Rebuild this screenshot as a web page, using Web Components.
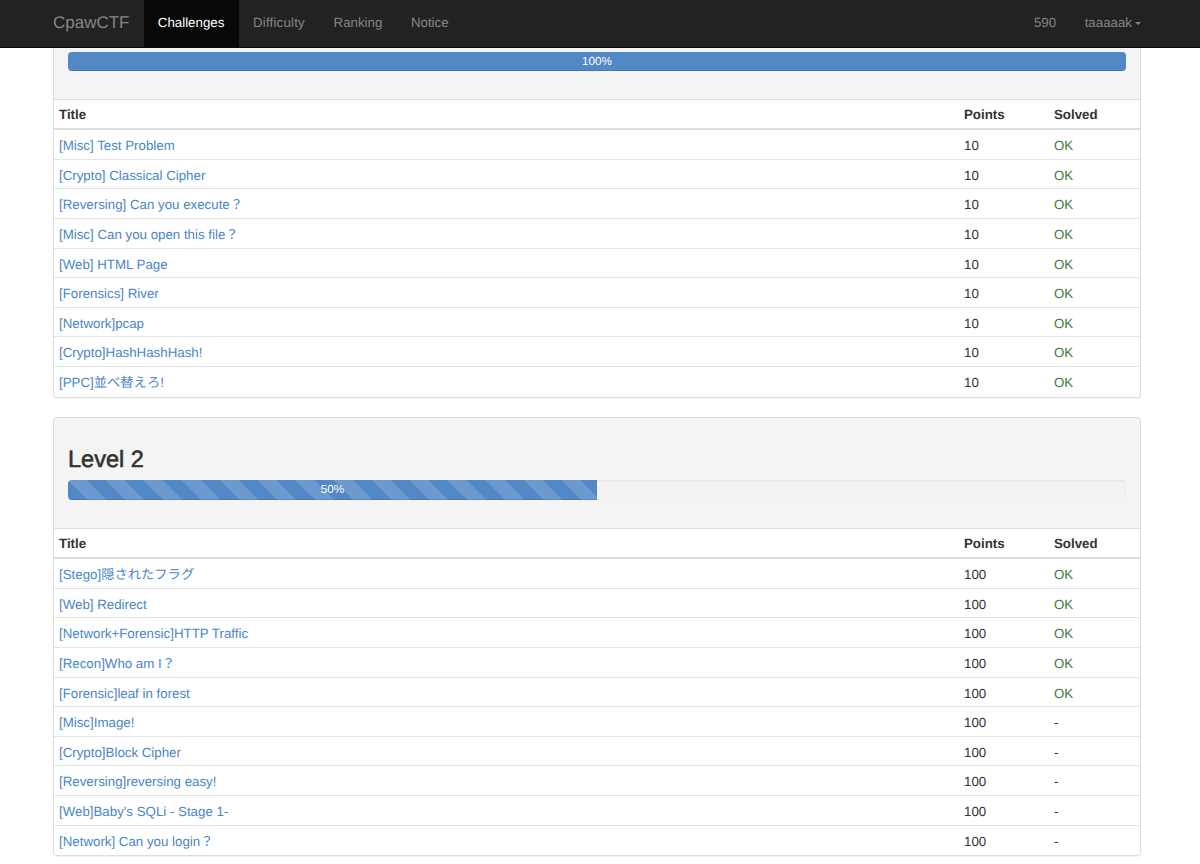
<!DOCTYPE html>
<html lang="ja">
<head>
<meta charset="utf-8">
<title>CpawCTF</title>
<style>
html, body { margin: 0; height: 100%; overflow: hidden; background: #fff; }
body {
    font-family: "Liberation Sans", "Noto Sans CJK JP", sans-serif;
    font-size: 13.3px;
    text-rendering: geometricPrecision;
    color: #333;
}
</style>
</head>
<body>
<cpaw-navbar score="590" user="taaaaak"></cpaw-navbar>
<cpaw-page>
    <level-panel percent="100" cut>
        <challenge-row title="[Misc] Test Problem" points="10" solved></challenge-row>
        <challenge-row title="[Crypto] Classical Cipher" points="10" solved></challenge-row>
        <challenge-row title="[Reversing] Can you execute？" points="10" solved></challenge-row>
        <challenge-row title="[Misc] Can you open this file？" points="10" solved></challenge-row>
        <challenge-row title="[Web] HTML Page" points="10" solved></challenge-row>
        <challenge-row title="[Forensics] River" points="10" solved></challenge-row>
        <challenge-row title="[Network]pcap" points="10" solved></challenge-row>
        <challenge-row title="[Crypto]HashHashHash!" points="10" solved></challenge-row>
        <challenge-row title="[PPC]並べ替えろ!" points="10" solved></challenge-row>
    </level-panel>
    <level-panel heading="Level 2" percent="50" striped>
        <challenge-row title="[Stego]隠されたフラグ" points="100" solved></challenge-row>
        <challenge-row title="[Web] Redirect" points="100" solved></challenge-row>
        <challenge-row title="[Network+Forensic]HTTP Traffic" points="100" solved></challenge-row>
        <challenge-row title="[Recon]Who am I？" points="100" solved></challenge-row>
        <challenge-row title="[Forensic]leaf in forest" points="100" solved></challenge-row>
        <challenge-row title="[Misc]Image!" points="100"></challenge-row>
        <challenge-row title="[Crypto]Block Cipher" points="100"></challenge-row>
        <challenge-row title="[Reversing]reversing easy!" points="100"></challenge-row>
        <challenge-row title="[Web]Baby's SQLi - Stage 1-" points="100"></challenge-row>
        <challenge-row title="[Network] Can you login？" points="100"></challenge-row>
    </level-panel>
</cpaw-page>

<script>
class CpawNavbar extends HTMLElement {
    constructor() {
        super();
        this.sr = this.attachShadow({ mode: "open" });
    }

    connectedCallback() {
        const score = this.getAttribute("score");
        const user = this.getAttribute("user");

        this.sr.innerHTML = `<style>
:host {
    display: flex;
    box-sizing: border-box;
    height: 48px;
    padding: 0 59px 0 53px;
    background: #222;
    border-bottom: 1px solid #080808;
    line-height: 46px;
    color: #858585;
}
a {
    color: inherit;
    text-decoration: none;
    padding: 0 14.3px;
}
.brand {
    font-size: 17px;
    padding: 0 14px 0 0;
}
.active {
    color: #fff;
    background: #080808;
}
.wide {
    letter-spacing: .2px;
}
.right {
    margin-left: auto;
    display: flex;
}
.caret {
    display: inline-block;
    margin-left: 3px;
    vertical-align: middle;
    border-top: 3.5px solid;
    border-left: 3.5px solid transparent;
    border-right: 3.5px solid transparent;
}
.user {
    padding-right: 0;
}
</style>
<a class="brand" href="#">CpawCTF</a>
<a class="active" href="#">Challenges</a>
<a class="wide" href="#">Difficulty</a>
<a href="#">Ranking</a>
<a href="#">Notice</a>
<div class="right">
    <a href="#">${score}</a>
    <a class="user" href="#">${user}<span class="caret"></span></a>
</div>`;
    }
}

class CpawPage extends HTMLElement {
    constructor() {
        super();
        this.sr = this.attachShadow({ mode: "open" });
        this.sr.innerHTML = `<style>
:host {
    display: flex;
    flex-direction: column;
    gap: 19.5px;
    width: 1088px;
    margin-left: 53px;
}
</style>
<slot></slot>`;
    }
}

class LevelPanel extends HTMLElement {
    constructor() {
        super();
        this.sr = this.attachShadow({ mode: "open" });
    }

    connectedCallback() {
        const heading = this.getAttribute("heading");
        const percent = this.getAttribute("percent");
        const striped = this.hasAttribute("striped") ? "striped" : "";

        this.sr.innerHTML = `<style>
:host {
    display: block;
    box-sizing: border-box;
    background: #f4f4f4;
    border: 1px solid #ddd;
    border-radius: 4px;
    box-shadow: 0 1px 1px rgba(0, 0, 0, .05);
    overflow: hidden;
}
:host([cut]) {
    border-top: 0;
    border-radius: 0 0 4px 4px;
}
.head {
    padding: 28px 14px 28.7px;
}
:host([cut]) .head {
    padding: 4px 14px 28px;
}
h2 {
    margin: 0 0 8.3px;
    font-size: 23.5px;
    font-weight: normal;
    -webkit-text-stroke: .6px;
    line-height: 26px;
}
.track {
    height: 19.2px;
    border-radius: 4px;
    background: #f3f3f3;
    box-shadow: inset 0 1px 2px rgba(0, 0, 0, .08);
    overflow: hidden;
}
.bar {
    height: 100%;
    background-color: #5288c6;
    box-shadow: inset 0 -1px 0 rgba(0, 0, 0, .12);
    color: #fff;
    font-size: 11.7px;
    line-height: 20px;
    text-align: center;
}
.striped {
    background-image: linear-gradient(45deg, rgba(255, 255, 255, .15) 25%, transparent 25%, transparent 50%, rgba(255, 255, 255, .15) 50%, rgba(255, 255, 255, .15) 75%, transparent 75%, transparent);
    background-size: 38px 38px;
}
.rows {
    background: #fff;
}
.cols {
    display: grid;
    grid-template-columns: 1fr 90px 91px;
    box-sizing: border-box;
    height: 31px;
    line-height: 30px;
    font-weight: bold;
    border-top: 1px solid #ddd;
    border-bottom: 2px solid #ddd;
}
.cols > div {
    padding-left: 5px;
}
</style>
<div class="head">
    ${heading ? `<h2>${heading}</h2>` : ""}
    <div class="track"><div class="bar ${striped}" style="width: ${percent}%">${percent}%</div></div>
</div>
<div class="rows">
    <div class="cols"><div>Title</div><div>Points</div><div>Solved</div></div>
    <slot></slot>
</div>`;
    }
}

class ChallengeRow extends HTMLElement {
    constructor() {
        super();
        this.sr = this.attachShadow({ mode: "open" });
    }

    connectedCallback() {
        const solved = this.hasAttribute("solved");

        this.sr.innerHTML = `<style>
:host {
    display: grid;
    grid-template-columns: 1fr 90px 91px;
    box-sizing: border-box;
    height: 29.6px;
    line-height: 31px;
    border-bottom: 1px solid #e4e4e4;
}
:host(:last-child) {
    border-bottom: 0;
}
div {
    padding-left: 5px;
}
a {
    color: #4a86c6;
    text-decoration: none;
}
.ok {
    color: #3c763d;
}
</style>
<div><a href="#"></a></div>
<div>${this.getAttribute("points")}</div>
<div class="${solved ? "ok" : ""}">${solved ? "OK" : "-"}</div>`;

        this.sr.querySelector("a").textContent = this.getAttribute("title");
    }
}

customElements.define("cpaw-navbar", CpawNavbar);
customElements.define("cpaw-page", CpawPage);
customElements.define("level-panel", LevelPanel);
customElements.define("challenge-row", ChallengeRow);
</script>
</body>
</html>
